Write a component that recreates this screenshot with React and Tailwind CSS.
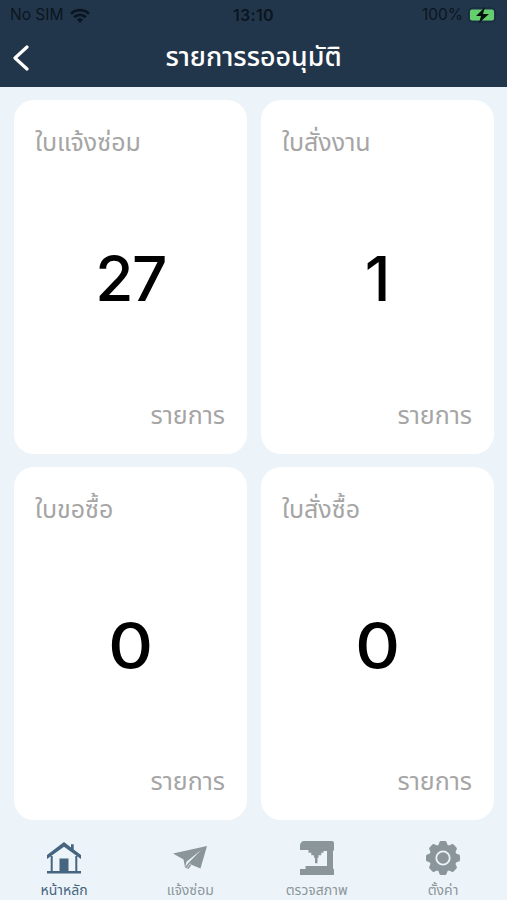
import clsx from 'clsx'

const CARDS = [
    { id: 'repair', title: 'ใบแจ้งซ่อม', count: 27, countClass: 'tracking-[-1.5px]' },
    { id: 'work', title: 'ใบสั่งงาน', count: 1, countClass: '' },
    { id: 'request', title: 'ใบขอซื้อ', count: 0, countClass: 'scale-x-[1.13]' },
    { id: 'purchase', title: 'ใบสั่งซื้อ', count: 0, countClass: 'scale-x-[1.13]' },
]

const TABS = [
    { id: 'home', label: 'หน้าหลัก', Icon: HomeIcon },
    { id: 'repair', label: 'แจ้งซ่อม', Icon: PlaneIcon },
    { id: 'inspect', label: 'ตรวจสภาพ', Icon: MachineIcon },
    { id: 'settings', label: 'ตั้งค่า', Icon: GearIcon },
]

function HomeIcon() {
    return (
        <svg viewBox="0 0 34 32" className="h-8 w-[34px]" fill="none" stroke="currentColor">
            <path d="M0 13 17 0l7 5.500V2.200h2.700V7.600L34 13v4L17 4.800 0 17Z" fill="currentColor" stroke="none" />
            <path d="M4.700 14v15.500M29.300 14v15.500" strokeWidth="2" />
            <path d="M0 30.300h34" strokeWidth="2.400" />
            <path d="M12.500 16.500h9V30h-9z" fill="currentColor" stroke="none" />
        </svg>
    )
}

function PlaneIcon() {
    return (
        <svg viewBox="0 0 34 24" className="h-6 w-[34px]" fill="currentColor">
            <path d="M34 0 27.500 22.500 18.500 18.800 15.500 23 12 21.500 10.500 13.500 0 7.500Z" />
            <path d="M12.200 21 13.500 15.800 28 4 15.300 17Z" fill="#edf4f9" />
            <path d="m14 22 2.800-4.200 1.500.8" fill="none" stroke="#edf4f9" strokeWidth=".7" />
        </svg>
    )
}

function MachineIcon() {
    return (
        <svg viewBox="0 0 34 34" className="h-[34px] w-[34px]" fill="currentColor">
            <path d="M4 0h28q2 0 2 2v6.500q0 1-1 1.500v17.500q1 0 1 1.500v5H0v-6h5.500v-3H27V10h-3.500v1.800h-2.300v2.400h-2.700v2.600h-1v5.500h-2.500v-5.500h-1v-2.600h-2.700v-2.400H8.500V9H0V4Q1 0 4 0Z" />
        </svg>
    )
}

function GearIcon() {
    return (
        <svg viewBox="0 0 34 34" className="h-[34px] w-[34px]" fill="currentColor">
            <circle cx="17" cy="17" r="13.800" />
            {[0, 45, 90, 135, 180, 225, 270, 315].map((deg) => (
                <path key={deg} d="M11.500 6.500 13.400 1.300Q13.800 0 15 0h4q1.200 0 1.600 1.300l1.900 5.200Z" transform={`rotate(${deg} 17 17)`} />
            ))}
            <circle cx="17" cy="17" r="6.700" fill="none" stroke="#edf4f9" strokeWidth="1.800" />
        </svg>
    )
}

function StatusBar() {
    return (
        <div className="grid h-[30px] grid-cols-3 items-center px-2.5 font-['Inter'] text-[15.500px] leading-none text-[#0b1520]">
            <div className="flex items-center gap-[7px]">
                <span>No SIM</span>
                <svg viewBox="0 0 20 15" className="h-[15px] w-5" fill="none" stroke="currentColor" strokeWidth="2.800">
                    <path d="M1 5.800a13 13 0 0 1 18 0M4.200 9.200a8.400 8.400 0 0 1 11.600 0" />
                    <path d="m10 15-3.200-3.400a4.600 4.600 0 0 1 6.400 0Z" fill="currentColor" stroke="none" />
                </svg>
            </div>
            <span className="text-center text-base font-semibold tracking-[0.3px]">13:10</span>
            <div className="flex items-center justify-end gap-[5px]">
                <span>100%</span>
                <svg viewBox="0 0 31 16" className="-mr-0.5 h-4 w-[31px]">
                    <rect x=".5" y="1" width="27" height="14" rx="4" fill="#20364a" stroke="#172b3d" />
                    <rect x="2" y="2.500" width="24" height="11" rx="2" fill="#65cf70" />
                    <path d="M29 6q1.500 2 0 4Z" fill="#172b3d" />
                    <path d="m17 0-9 9h5l-2 7 10-9h-6Z" fill="#07120d" />
                </svg>
            </div>
        </div>
    )
}

function Card({ title, count, countClass }) {
    return (
        <section className="flex flex-col justify-between rounded-[20px] bg-white px-[22px] pt-[27px] pb-[22px] text-[25px] text-[#a5a5a5]">
            <h2 className="-ml-px h-8 leading-8 whitespace-nowrap">{title}</h2>
            <p className={clsx("text-center font-['Inter'] text-[62px] leading-[64px] font-medium text-black", countClass)}>{count}</p>
            <p className="h-8 text-right leading-8">รายการ</p>
        </section>
    )
}

export default function App() {
    return (
        <div className="flex h-[900px] w-[507px] flex-col overflow-hidden bg-[#edf4f9] font-['Noto_Sans_Thai','Noto_Sans',sans-serif]">
            <header className="h-[87px] bg-[#22364b]">
                <StatusBar />
                <div className="grid h-[55px] grid-cols-[40px_1fr_40px] items-center text-white">
                    <svg viewBox="0 0 16 26" className="ml-[13px] h-[26px] w-4" fill="none" stroke="currentColor" strokeWidth="3.200" strokeLinecap="round" strokeLinejoin="round">
                        <path d="M14 2 2 13l12 11" />
                    </svg>
                    <h1 className="text-center text-[26.800px] leading-9 font-medium whitespace-nowrap">รายการรออนุมัติ</h1>
                </div>
            </header>

            <main className="grid h-[733px] grid-cols-2 grid-rows-2 gap-x-3.5 gap-y-[13px] pt-[13px] pr-[13px] pl-3.5">
                {CARDS.map((card) => (
                    <Card key={card.id} {...card} />
                ))}
            </main>

            <nav className="flex h-20 justify-between px-[1px]">
                {TABS.map(({ id, label, Icon }) => (
                    <button key={id} className={clsx('flex w-[126px] flex-col items-center gap-[3px] pt-5 text-sm', id === 'home' ? 'text-[#456580]' : 'text-[#8b969b]')}>
                        <span className="flex h-[36px] items-center justify-center">
                            <Icon />
                        </span>
                        <span className="h-[21px] leading-6 whitespace-nowrap">{label}</span>
                    </button>
                ))}
            </nav>
        </div>
    )
}
